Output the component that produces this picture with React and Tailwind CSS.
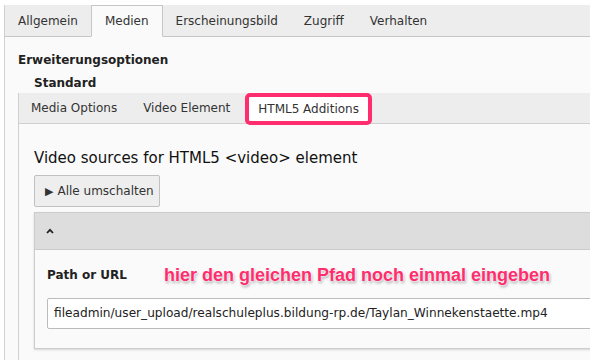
export default function App() {
  const font = { fontFamily: '"DejaVu Sans", Verdana, sans-serif' };
  return (
    <div className="w-[590px] h-[360px] bg-white overflow-hidden text-[#222]" style={font}>
      <div className="pt-[5px] pl-[4px] w-[600px]">
        {/* top tabs */}
        <div className="flex h-[32px] bg-[#ededed] border-b border-[#c6c6c6] border-l border-l-[#d0d0d0] text-[12px] text-[#333]">
          <div className="px-[13px] flex items-center">Allgemein</div>
          <div className="px-[13px] flex items-center bg-[#fafafa] border border-[#c6c6c6] border-b-[#fafafa] -mb-px">Medien</div>
          <div className="px-[13px] flex items-center">Erscheinungsbild</div>
          <div className="px-[13px] flex items-center">Zugriff</div>
          <div className="px-[13px] flex items-center">Verhalten</div>
        </div>
        {/* content */}
        <div className="bg-[#fafafa] border-l border-[#d0d0d0] h-[400px] pl-[13px]">
          <div className="pt-[16px] text-[12px] font-bold leading-[14px]">Erweiterungsoptionen</div>
          <div className="pt-[9px] pl-[16px] text-[12px] font-bold leading-[14px]">Standard</div>
          {/* inner tabs */}
          <div className="mt-[3px] flex h-[31px] bg-[#ededed] border-b border-[#d0d0d0] border-l border-l-[#d0d0d0] text-[12px] text-[#333]">
            <div className="px-[12px] flex items-center">Media Options</div>
            <div className="px-[14px] flex items-center">Video Element</div>
            <div className="ml-[1px] px-[9px] flex items-center bg-white border-[4px] border-[#ff2d6e] rounded-[5px] h-[32px] -mb-px">HTML5 Additions</div>
          </div>
          <div className="border-l border-[#d0d0d0] pl-[15px] h-[300px]">
            <div className="pt-[25px] text-[15px] leading-[18px] text-[#111]">Video sources for HTML5 &lt;video&gt; element</div>
            <div className="mt-[8px] w-[126px] h-[32px] flex items-center gap-[4px] pl-[10px] bg-[#eeeeee] border border-[#c0c0c0] rounded-[2px] text-[12px] text-[#333]">
              <span className="text-[11px] leading-none">▶</span>
              <span>Alle umschalten</span>
            </div>
            <div className="mt-[5px] border border-[#cccccc] shadow-[0_1px_2px_rgba(0,0,0,0.15)]">
              <div className="h-[37px] bg-[#dddddd] border-b border-[#cccccc] flex items-center pl-[11px]">
                <svg width="8" height="6" viewBox="0 0 8 6"><path d="M1 5 L4 1.8 L7 5" stroke="#222" strokeWidth="1.8" fill="none" /></svg>
              </div>
              <div className="bg-[#fafafa] h-[98px] pl-[12px] pt-[16px]">
                <div className="flex items-center h-[18px]">
                  <span className="text-[12px] font-bold w-[117px]">Path or URL</span>
                  <span
                    className="text-[18px] font-bold text-[#ff2d6e] [text-shadow:0_0_2px_#fff,0_0_2px_#fff,1px_2px_3px_rgba(0,0,0,0.35)]"
                    style={{ fontFamily: '"Liberation Sans", Arial, sans-serif' }}
                  >
                    hier den gleichen Pfad noch einmal eingeben
                  </span>
                </div>
                <div className="mt-[14px] h-[31px] bg-white border border-[#bbbbbb] rounded-[2px] flex items-center pl-[6px] text-[12.15px] text-[#222]">
                  fileadmin/user_upload/realschuleplus.bildung-rp.de/Taylan_Winnekenstaette.mp4
                </div>
              </div>
            </div>
          </div>
        </div>
      </div>
    </div>
  );
}
